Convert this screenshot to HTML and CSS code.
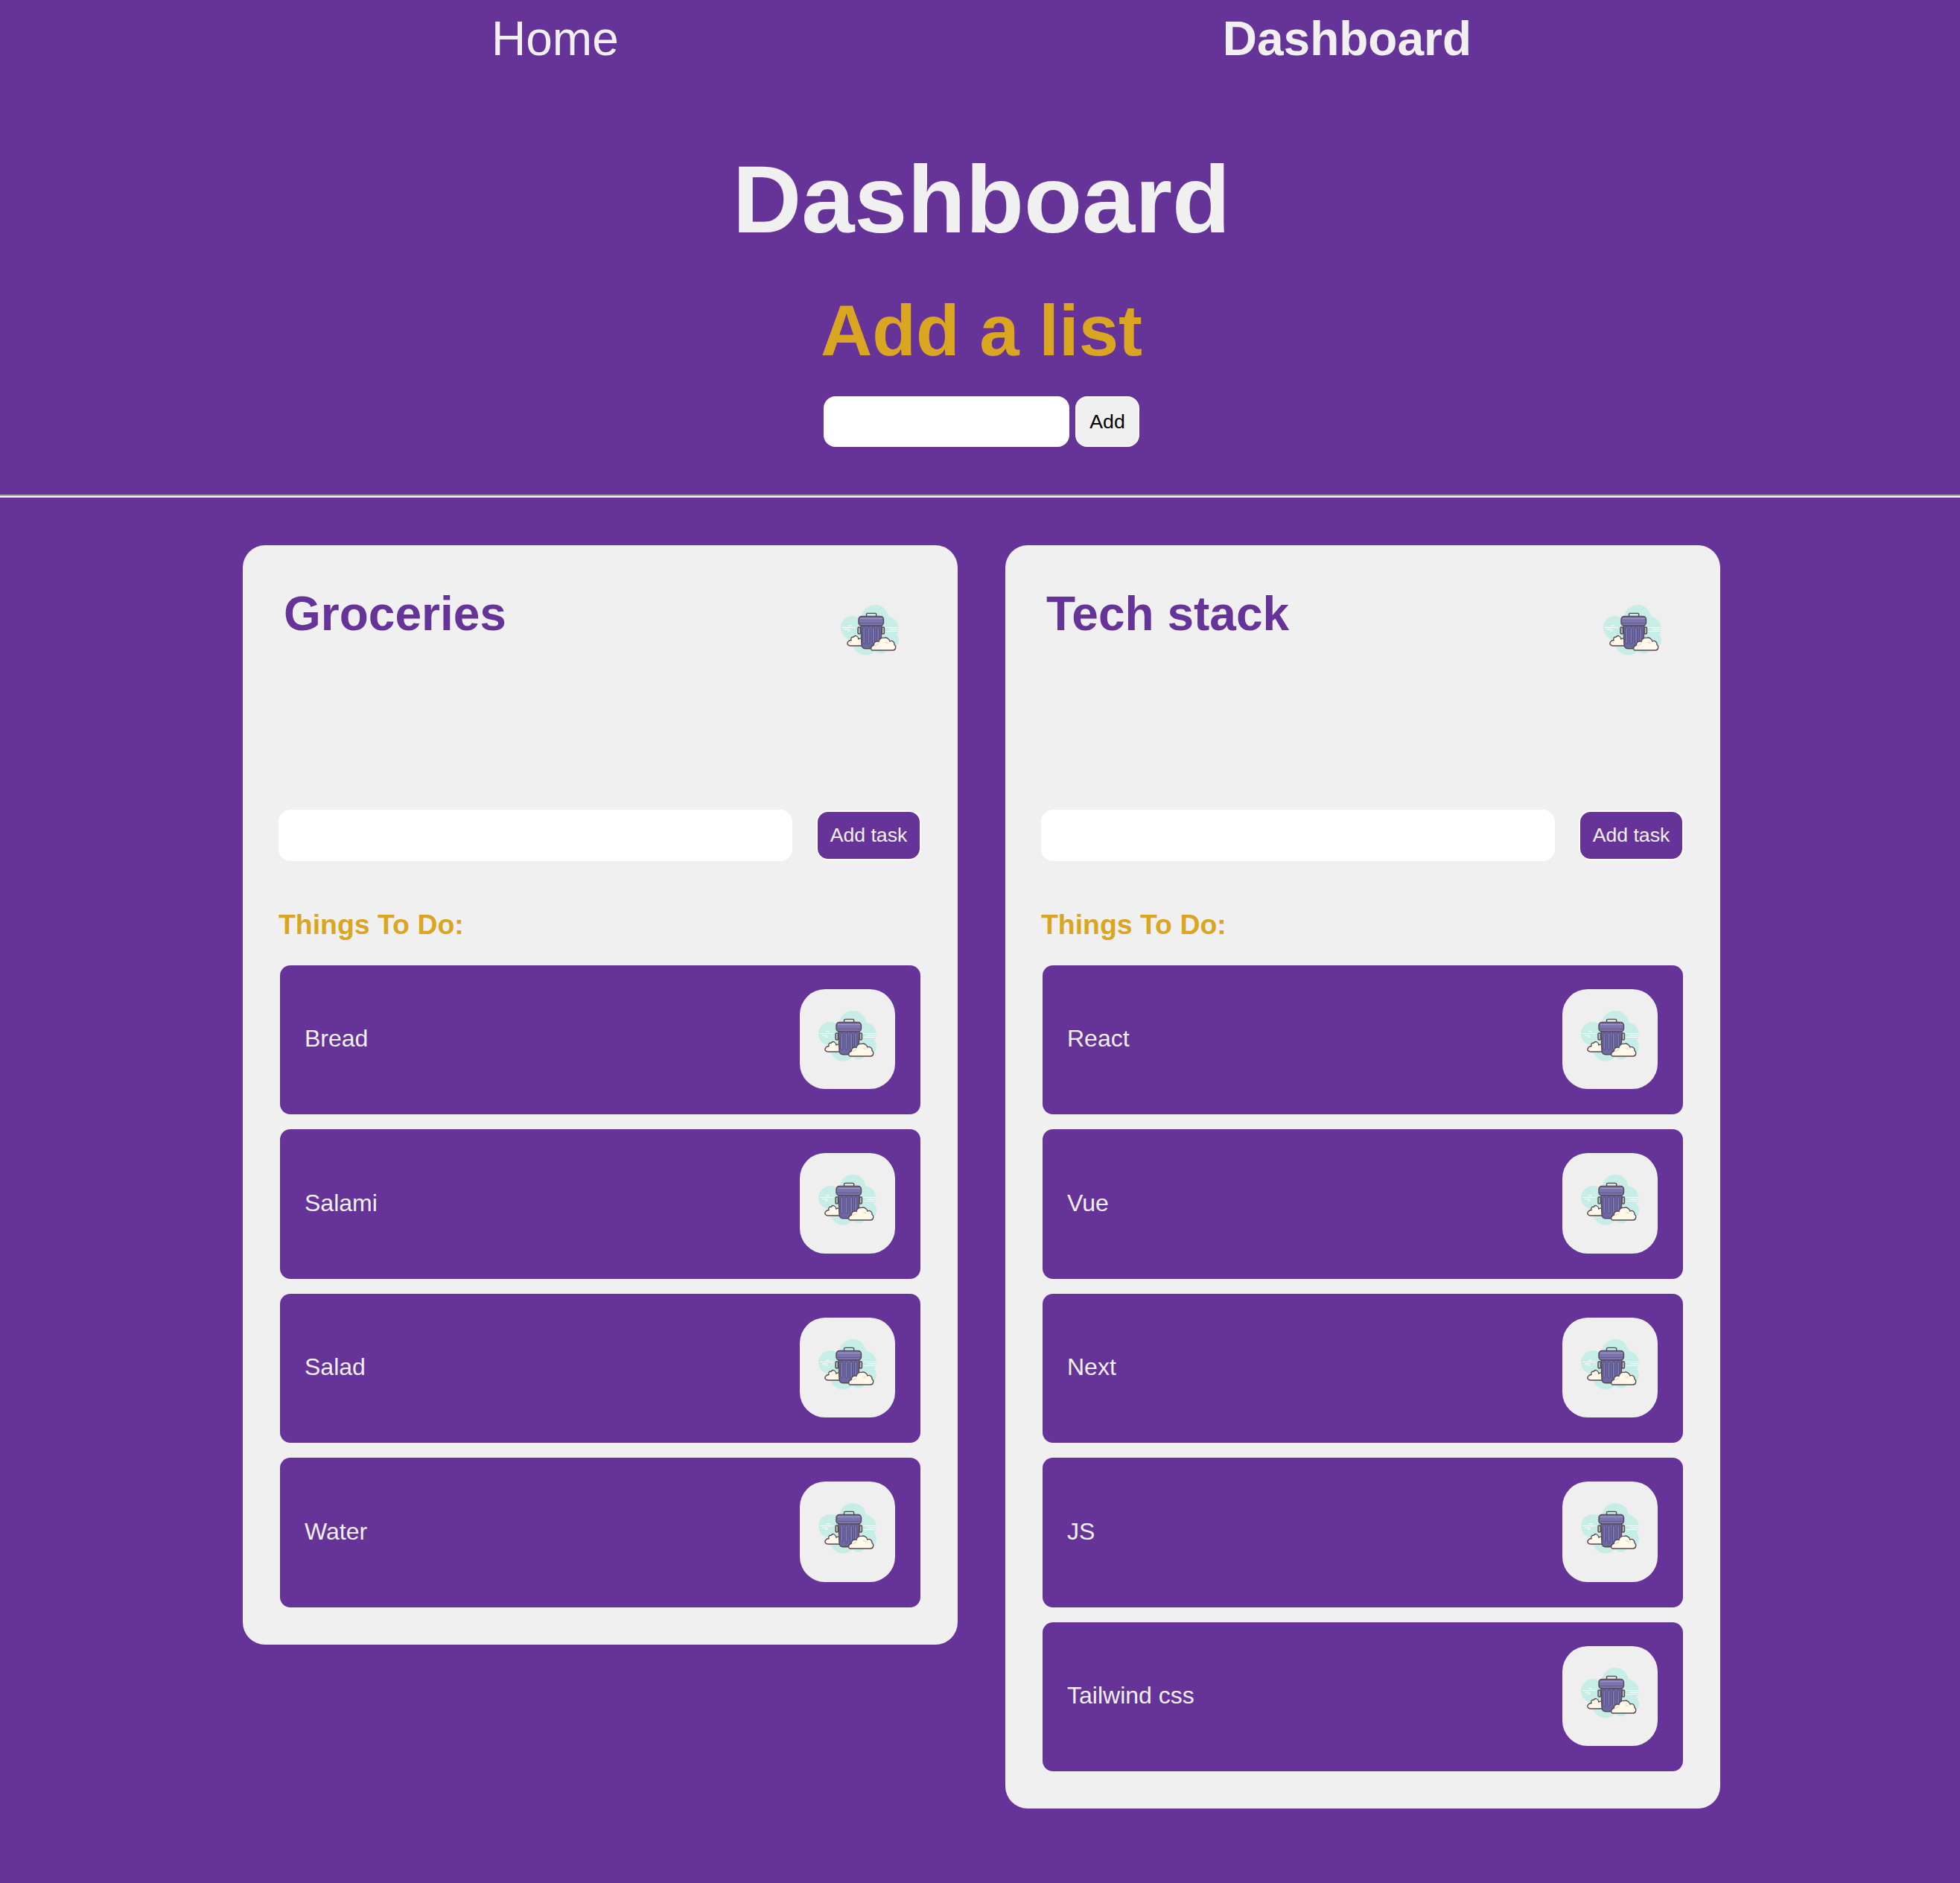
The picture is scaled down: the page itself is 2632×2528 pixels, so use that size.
FILE: index.html
```html
<!DOCTYPE html>
<html lang="en">

<head>
    <meta charset="UTF-8">
    <meta name="viewport" content="width=device-width, initial-scale=1.0">
    <title>Dashboard</title>
    <link rel="stylesheet" href="styles.css">
</head>

<body>
    <svg class="sprite" xmlns="http://www.w3.org/2000/svg">
        <symbol id="trash" viewBox="0 0 96 96">
            <g fill="#c6eee6">
                <circle cx="55" cy="28" r="18"></circle>
                <circle cx="25" cy="41" r="16"></circle>
                <circle cx="42" cy="60" r="17.5"></circle>
                <circle cx="71" cy="41" r="15.5"></circle>
                <circle cx="75" cy="58" r="12"></circle>
                <circle cx="63" cy="65" r="10.5"></circle>
                <rect x="30" y="30" width="40" height="30"></rect>
            </g>
            <g stroke="#fff" stroke-width="0.9" fill="none">
                <path d="M11 40.5H29M19 38H24M14 43H21M18 45H22"></path>
                <path d="M69 40.5H86M74 43H86M69 45.5H85"></path>
            </g>
            <path d="M22 65H38V56C36 55 34 55 33 56 32 51.5 28 50 26 53.5 24 52.5 22 55 23 57.5 19.5 57.5 16.5 61 18.5 63.5 19.5 64.7 21 65 22 65Z" fill="#fdf8e8" stroke="#5b4650" stroke-width="1.3"></path>
            <g stroke="#5b4650" stroke-width="1.4">
                <rect x="32" y="40" width="3.5" height="9" rx="1.5" fill="#a8c4bc"></rect>
                <rect x="64" y="40" width="3.5" height="9" rx="1.5" fill="#a8c4bc"></rect>
                <path d="M43.5 26V23a1.6 1.6 0 0 1 1.6-1.6h10a1.6 1.6 0 0 1 1.6 1.6V26" fill="none"></path>
                <path d="M36 37 37 64Q37.5 68.7 42 68.7H58Q62.5 68.7 63 64L64 37Z" fill="#6d68a2"></path>
                <rect x="33" y="25.5" width="33.5" height="12.5" rx="4" fill="#7a75ad"></rect>
            </g>
            <path d="M35 28.5H65" stroke="#9c98c6" stroke-width="1.2"></path>
            <path d="M34 34.5H65.5" stroke="#5f5a94" stroke-width="1"></path>
            <g fill="#7f7ab2" stroke="#4e4880" stroke-width="0.9">
                <rect x="38.8" y="40" width="3" height="22" rx="1.5"></rect>
                <rect x="45" y="40" width="3" height="22" rx="1.5"></rect>
                <rect x="51.5" y="40" width="3" height="22" rx="1.5"></rect>
                <rect x="57.8" y="40" width="3" height="22" rx="1.5"></rect>
            </g>
            <path d="M52 71H79C83 71 84 65.5 81 63.5 81.5 59.5 77.5 57.5 75 59 74 55.5 70 53 67 54.5 63.5 53.5 60.5 56.5 60 59.5 56.5 58 53 60.5 53.5 64 49 65 48.5 71 52 71Z" fill="#fdf8e8" stroke="#5b4650" stroke-width="1.3"></path>
            <path d="M55 65 60 62M69 60 73 62" stroke="#cfc9b8" stroke-width="0.8" fill="none"></path>
        </symbol>
    </svg>

    <nav class="nav">
        <a class="nav-link" href="#">Home</a>
        <a class="nav-link nav-link-active" href="#">Dashboard</a>
    </nav>

    <div class="intro">
        <h1 class="title">Dashboard</h1>
        <h2 class="subtitle">Add a list</h2>
        <form class="list-form">
            <input class="list-input" type="text">
            <button class="list-button" type="button">Add</button>
        </form>
    </div>

    <hr class="divider">

    <div class="lists">
        <section class="card">
            <div class="card-header">
                <h2 class="card-title">Groceries</h2>
                <button class="icon-button" type="button"><svg class="icon"><use href="#trash"></use></svg></button>
            </div>
            <form class="task-form">
                <input class="task-input" type="text">
                <button class="task-button" type="button">Add task</button>
            </form>
            <h3 class="todo-title">Things To Do:</h3>
            <ul class="tasks">
                <li class="task"><span>Bread</span><button class="icon-button" type="button"><svg class="icon"><use href="#trash"></use></svg></button></li>
                <li class="task"><span>Salami</span><button class="icon-button" type="button"><svg class="icon"><use href="#trash"></use></svg></button></li>
                <li class="task"><span>Salad</span><button class="icon-button" type="button"><svg class="icon"><use href="#trash"></use></svg></button></li>
                <li class="task"><span>Water</span><button class="icon-button" type="button"><svg class="icon"><use href="#trash"></use></svg></button></li>
            </ul>
        </section>

        <section class="card">
            <div class="card-header">
                <h2 class="card-title">Tech stack</h2>
                <button class="icon-button" type="button"><svg class="icon"><use href="#trash"></use></svg></button>
            </div>
            <form class="task-form">
                <input class="task-input" type="text">
                <button class="task-button" type="button">Add task</button>
            </form>
            <h3 class="todo-title">Things To Do:</h3>
            <ul class="tasks">
                <li class="task"><span>React</span><button class="icon-button" type="button"><svg class="icon"><use href="#trash"></use></svg></button></li>
                <li class="task"><span>Vue</span><button class="icon-button" type="button"><svg class="icon"><use href="#trash"></use></svg></button></li>
                <li class="task"><span>Next</span><button class="icon-button" type="button"><svg class="icon"><use href="#trash"></use></svg></button></li>
                <li class="task"><span>JS</span><button class="icon-button" type="button"><svg class="icon"><use href="#trash"></use></svg></button></li>
                <li class="task"><span>Tailwind css</span><button class="icon-button" type="button"><svg class="icon"><use href="#trash"></use></svg></button></li>
            </ul>
        </section>
    </div>
</body>

</html>
```

FILE: styles.css
```css
* {
    box-sizing: border-box;
    margin: 0;
    padding: 0;
}

body {
    font-family: "Liberation Sans", Arial, sans-serif;
    background-color: #663399;
    color: #f0f0f0;
    min-height: 2528px;
    padding-bottom: 100px;
}

.sprite {
    display: none;
}

/* Nav */
.nav {
    display: flex;
    justify-content: center;
    gap: 811px;
    padding-top: 15px;
    padding-left: 4px;
}

.nav-link {
    font-size: 64px;
    color: #f0f0f0;
    text-decoration: none;
}

.nav-link-active {
    font-weight: bold;
}

/* Add a list */
.intro {
    display: flex;
    flex-direction: column;
    align-items: center;
    padding-left: 4px;
}

.title {
    font-size: 128px;
    font-weight: bold;
    margin-top: 105px;
}

.subtitle {
    font-size: 96px;
    font-weight: bold;
    color: #daa520;
    margin-top: 48px;
}

.list-form {
    display: flex;
    gap: 8px;
    margin-top: 33px;
}

.list-input {
    width: 330px;
    height: 68px;
    border: none;
    border-radius: 16px;
    background-color: white;
}

.list-button {
    width: 86px;
    height: 68px;
    font-family: inherit;
    font-size: 26.67px;
    color: black;
    background-color: #efefef;
    border: 2px solid #f8f8f8;
    border-radius: 16px;
}

.divider {
    border: none;
    border-top: 2px solid #a6a6a6;
    border-bottom: 2px solid #f4f4f4;
    margin-top: 64px;
}

/* Cards */
.lists {
    display: flex;
    justify-content: center;
    align-items: flex-start;
    gap: 64px;
    padding-left: 4px;
    margin-top: 64px;
}

.card {
    width: 960px;
    padding: 50px 50px 50px 48px;
    background-color: #f0f0f0;
    border-radius: 30px;
}

.card-header {
    display: flex;
    justify-content: space-between;
    align-items: flex-start;
    padding: 1px 4px 0 7px;
}

.card-title {
    font-size: 64px;
    font-weight: bold;
    color: #663399;
    margin-top: 4px;
}

.icon-button {
    display: flex;
    align-items: center;
    justify-content: center;
    width: 128px;
    height: 134.5px;
    flex-shrink: 0;
    border: none;
    border-radius: 34px;
    background-color: #efefef;
}

.icon {
    width: 96px;
    height: 96px;
}

.task-form {
    display: flex;
    justify-content: space-between;
    align-items: center;
    margin-top: 169.5px;
    margin-right: -1px;
}

.task-input {
    width: 690px;
    height: 69px;
    border: none;
    border-radius: 16px;
    background-color: white;
}

.task-button {
    width: 141px;
    height: 67px;
    font-family: inherit;
    font-size: 26.67px;
    color: #f0f0f0;
    background-color: #663399;
    border: 2px solid #fff;
    border-radius: 16px;
}

.todo-title {
    font-size: 37.44px;
    font-weight: bold;
    color: #daa520;
    margin: 64px 0 32.5px;
}

.tasks {
    display: flex;
    flex-direction: column;
    gap: 20px;
    list-style: none;
    margin-left: 2px;
}

.task {
    display: flex;
    justify-content: space-between;
    align-items: center;
    padding: 32px 34px 34px 33px;
    font-size: 32px;
    color: #f0f0f0;
    background-color: #663399;
    border-radius: 14px;
}
```
